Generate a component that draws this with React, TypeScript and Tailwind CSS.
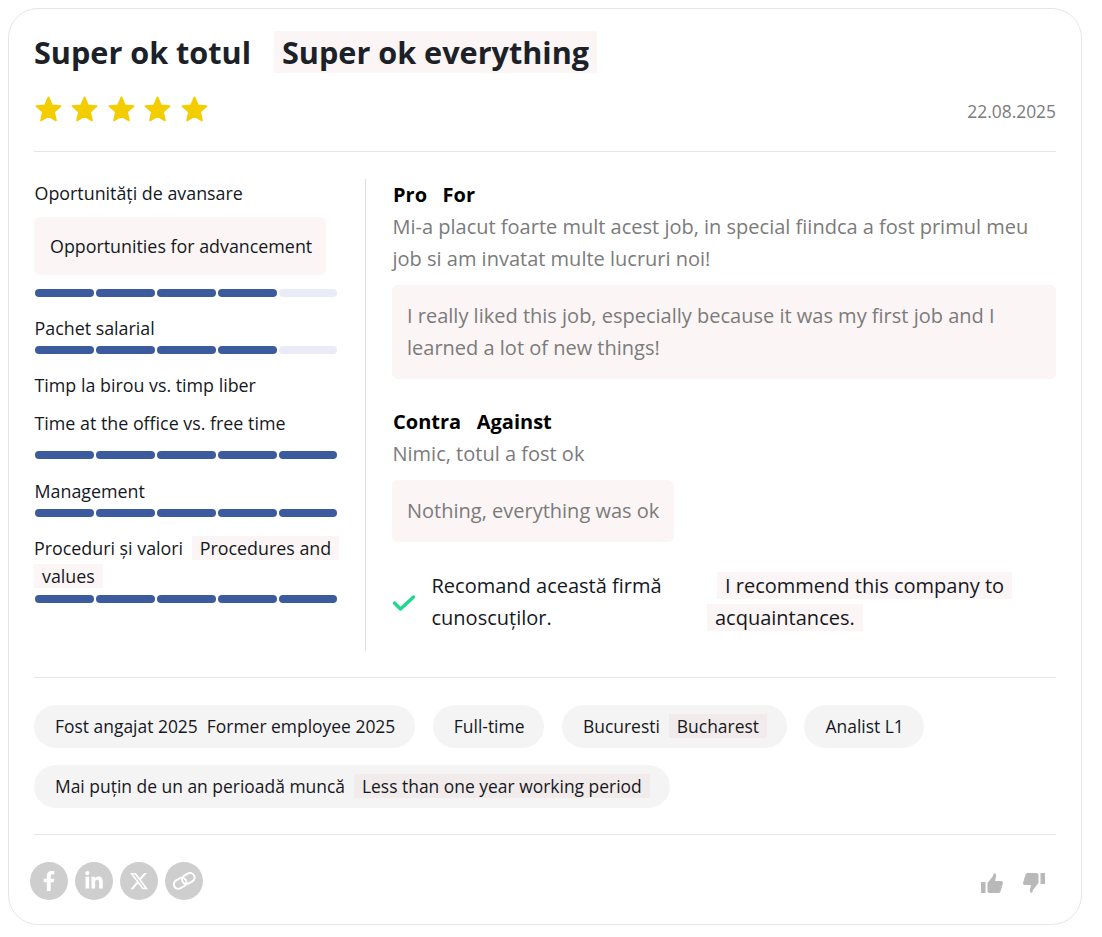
import React from 'react';
import { FaFacebookF, FaLinkedinIn } from 'react-icons/fa';
import { FaXTwitter } from 'react-icons/fa6';

const Bar = ({ filled }: { filled: number }) => (
  <div className="flex gap-[2px] w-[302px] ml-px">
    {[0, 1, 2, 3, 4].map((i) => (
      <div key={i} className={`h-2 w-[59px] last:w-[58px] shrink-0 rounded-full ${i < filled ? 'bg-[#3c5a9e]' : 'bg-[#e9ebf6]'}`} />
    ))}
  </div>
);

const Tag = ({ children }: { children: React.ReactNode }) => (
  <div className="h-[43px] flex items-center pl-[21px] pr-[20px] rounded-full bg-[#f5f4f4] text-[17.45px] text-[#15181e]">{children}</div>
);

// translated text sits on a see-through pink, it gets darker on top of the pills
const Tr = ({ children }: { children: React.ReactNode }) => (
  <span className="bg-[#d9a0a0]/10 px-2 box-decoration-clone">{children}</span>
);

const Social = ({ children }: { children: React.ReactNode }) => (
  <div className="w-[38px] h-[38px] rounded-full bg-[#cecece] text-white flex items-center justify-center text-[20px]">{children}</div>
);

const Star = () => (
  <svg viewBox="0 0 24 24" className="w-[29px] h-[29px]" fill="currentColor" stroke="currentColor" strokeWidth="1.5" strokeLinejoin="round">
    <path d="M12 17.27L18.18 21l-1.64-7.03L22 9.24l-7.19-.61L12 2 9.19 8.63 2 9.24l5.46 4.73L5.82 21z" />
  </svg>
);

const Thumb = ({ className }: { className?: string }) => (
  <svg viewBox="0 0 22 20" className={`w-[22px] h-[20px] ${className ?? ''}`} fill="currentColor">
    <rect x="0" y="9" width="4.5" height="11" />
    <path d="M6.5 10L12 3C12.5 1 13 0 14 .3C15.5 1 15.5 3 14.5 5.5L14 8H20C21.5 8 22 9 22 10L19.5 18.5C19 19.5 18.5 20 17 20H8.5C7.2 20 6.5 19 6.5 18Z" />
  </svg>
);

const LinkIcon = () => (
  <svg viewBox="0 0 24 18" className="w-[24px] h-[18px]" fill="none" stroke="currentColor" strokeWidth="2">
    <g transform="rotate(-30 12 9)">
      <rect x="1" y="4.5" width="13" height="9" rx="4.5" />
      <rect x="10.5" y="4.5" width="13" height="9" rx="4.5" />
    </g>
  </svg>
);

export default function App() {
  return (
    <div className="font-['Open_Sans',sans-serif] bg-white h-[937px] p-2 pr-5">
      <div className="h-[917px] border border-[#e6e6e6] rounded-[30px] px-[25px] pt-[21px]">
        {/* Header */}
        <h1 className="text-[30.6px] leading-[44px] font-bold text-[#1c2128] whitespace-pre">
          Super ok totul <span className="ml-[15px]"><Tr>Super ok everything</Tr></span>
        </h1>
        <div className="flex justify-between items-center mt-[14px] h-[44px] pb-[3px]">
          <div className="flex text-[#f4cd00] mt-[2px] -ml-[0.5px]">
            {[0, 1, 2, 3, 4].map((i) => <span key={i} className="w-[36.5px]"><Star /></span>)}
          </div>
          <span className="text-[17.4px] text-[#7b7b7b] mt-[6px]">22.08.2025</span>
        </div>
        <div className="border-t border-[#e6e6e6] mt-[19px]" />

        {/* Body */}
        <div className="flex mt-[27px]">
          <div className="w-[332px] h-[472px] border-r border-[#dcdcdc] text-[17.85px] leading-[28px] text-[#15181e] shrink-0">
            <div className="ml-[0.5px]">Oportunități de avansare</div>
            <div className="bg-[#fbf5f5] rounded-md w-[292px] h-[58px] flex items-center px-4 mt-[10px] whitespace-nowrap">Opportunities for advancement</div>
            <div className="mt-[14px]"><Bar filled={4} /></div>
            <div className="ml-[0.5px] mt-[17px] mb-[4px]">Pachet salarial</div>
            <Bar filled={4} />
            <div className="ml-[0.5px] mt-[17px]">Timp la birou vs. timp liber</div>
            <div className="ml-[0.5px] mt-[10px]">Time at the office vs. free time</div>
            <div className="mt-[14px]"><Bar filled={5} /></div>
            <div className="ml-[0.5px] mt-[18px] mb-[4px]">Management</div>
            <Bar filled={5} />
            <div className="mt-[17px] mb-[5px] w-[305px]">
              Proceduri și valori <span className="ml-1"><Tr>Procedures and values</Tr></span>
            </div>
            <Bar filled={5} />
          </div>
          <div className="flex-1 pl-[26px] text-[20px] leading-[32px] text-[#7b7b7b]">
            <div className="ml-px font-bold text-[20px] text-black leading-[30px] mt-px whitespace-pre">Pro   For</div>
            <p className="ml-[0.5px] mt-px">Mi-a placut foarte mult acest job, in special fiindca a fost primul meu job si am invatat multe lucruri noi!</p>
            <div className="bg-[#fbf5f5] rounded-md px-[15px] py-[15px] mt-[10px]">I really liked this job, especially because it was my first job and I learned a lot of new things!</div>
            <div className="ml-px font-bold text-[20px] text-black leading-[30px] mt-[28px] whitespace-pre">Contra   Against</div>
            <p className="ml-[0.5px] mt-px">Nimic, totul a fost ok</p>
            <div className="bg-[#fbf5f5] rounded-md px-[15px] py-[15px] mt-[10px] w-fit">Nothing, everything was ok</div>
            <div className="flex items-center mt-[28px] text-[#15181e]">
              <svg viewBox="0 0 24 18" className="w-[24px] h-[18px] shrink-0 mr-[15.5px] mt-[2px]" fill="none" stroke="#1fd88e" strokeWidth="3.4" strokeLinecap="round" strokeLinejoin="round">
                <path d="M2.5 9l6 6L21.5 3" />
              </svg>
              <div className="w-[600px]">
                <span className="inline-block w-[285px]">Recomand această firmă cunoscuților.</span>
                <span className="inline-block w-[318px] align-top -ml-[9.5px]">
                  <span className="ml-[10px]"><Tr>I recommend this company to acquaintances.</Tr></span>
                </span>
              </div>
            </div>
          </div>
        </div>

        <div className="border-t border-[#e6e6e6] mt-[26px]" />

        {/* Tags */}
        <div className="flex flex-wrap gap-x-[17.5px] gap-y-[17px] mt-[27px]">
          <Tag>Fost angajat 2025&nbsp; Former employee 2025</Tag>
          <Tag>Full-time</Tag>
          <Tag><span>Bucuresti</span><span className="ml-[9px]"><Tr>Bucharest</Tr></span></Tag>
          <Tag>Analist L1</Tag>
          <Tag><span>Mai puțin de un an perioadă muncă</span><span className="ml-[9px]"><Tr>Less than one year working period</Tr></span></Tag>
        </div>

        <div className="border-t border-[#e6e6e6] mt-[26px]" />

        {/* Footer */}
        <div className="flex justify-between items-center mt-[27px] -ml-1">
          <div className="flex gap-[7px]">
            <Social><FaFacebookF /></Social>
            <Social><FaLinkedinIn /></Social>
            <Social><FaXTwitter /></Social>
            <Social><LinkIcon /></Social>
          </div>
          <div className="flex gap-[20px] text-[#b9b9b9] mr-[11px] mt-[3px]">
            <Thumb />
            <Thumb className="rotate-180" />
          </div>
        </div>
      </div>
    </div>
  );
}
